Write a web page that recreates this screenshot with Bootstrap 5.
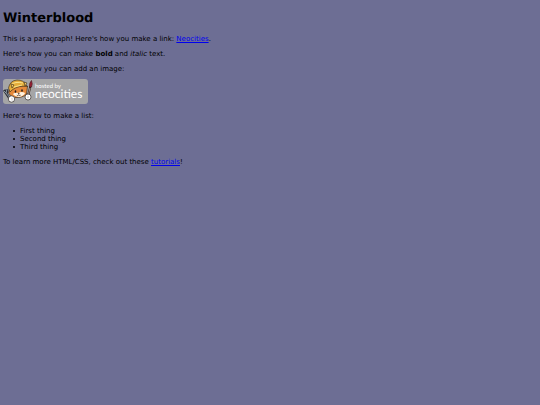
<!DOCTYPE html>
<html lang="en">
<head>
<meta charset="utf-8">
<meta name="viewport" content="width=device-width, initial-scale=1">
<title>Winterblood</title>
<link href="https://cdn.jsdelivr.net/npm/bootstrap@5.3.0/dist/css/bootstrap.min.css" rel="stylesheet">
<style>
body { background: #6d6e94; color: #000; font: 7px/8px "DejaVu Sans", Verdana, sans-serif; padding: 10px 3px; text-rendering: geometricPrecision; }
h1 { font-size: 13px; line-height: 16px; font-weight: 700; margin: 1px 0 8px; }
p, ul { margin-bottom: 7px; }
.steps { padding-left: 10px; }
.steps li { gap: 5px; }
.steps li::before { content: ""; width: 2px; height: 2px; border-radius: 50%; background: #000; }
strong { font-weight: 700; }
a, a:hover { color: #0000ee; }
.host-logo { width: 85px; height: 25px; }
.host-row { margin: 6px 0 8px; }
.host-logo text { font-family: Lato, "Open Sans", sans-serif; fill: #fff; }
</style>
</head>
<body>
<main>
  <h1>Winterblood</h1>
  <p>This is a paragraph! Here's how you make a link: <a href="https://neocities.org">Neocities</a>.</p>
  <p>Here's how you can make <strong>bold</strong> and <em>italic</em> text.</p>
  <p class="mb-0">Here's how you can add an image:</p>
  <p class="host-row">
    <a class="d-block" href="https://neocities.org" aria-label="Hosted by Neocities">
      <svg class="host-logo d-block" viewBox="0 0 85 25" aria-hidden="true">
        <rect width="85" height="25" rx="3" fill="#a5a5a6"/>
        <!-- cat head and hard hat -->
        <g stroke="#342719" stroke-width=".6" stroke-linejoin="round">
          <path d="M7 8 5.700 13Q6 17 12 18.500Q20 19 23.500 15L24.500 7 20 7Z" fill="#e5893a"/>
          <path d="M10 15Q12 13 15 14Q19 12 22 14Q21 17 16 18Q11 17 10 15Z" fill="#fff2df" stroke="none"/>
          <path d="M5.500 9Q7 1.500 14 1Q21 1 23 6L24.500 7.500Q16 6 9 11L7 13Z" fill="#e4ad3a"/>
          <path d="M8 6Q12 2 20 4M11 8 19 6" fill="none" stroke="#fff0a0" stroke-width=".8"/>
          <path d="m8 5 3 1-2 3zm13-2 3 1-2 3z" fill="#f6ce69"/>
        </g>
        <ellipse cx="12.500" cy="12.500" rx=".8" ry="1.200" fill="#211b1b"/>
        <ellipse cx="19" cy="11.500" rx=".8" ry="1.200" fill="#211b1b"/>
        <path d="m15 14 1.500.1-.8 1zM15.700 15v1m-2 0q1 1 2 0q1 1 2 0" fill="#493020" stroke="#493020" stroke-width=".4"/>
        <!-- wrench -->
        <path d="M1 11 3 14 7 20M4 10 4 14" fill="none" stroke="#303039" stroke-width="2.500"/>
        <path d="M1 12 3 14 4 10M3 14 7 19" fill="none" stroke="#8998a4" stroke-width="1"/>
        <circle cx="8.500" cy="20" r="3.200" fill="#fff" stroke="#302928" stroke-width=".7"/>
        <path d="m8 19 2 1m-2 1 2 0" stroke="#b8b3af" stroke-width=".5"/>
        <!-- paintbrush -->
        <path d="M25 17 27.500 7" stroke="#382721" stroke-width="2"/>
        <path d="M25.500 15 27 9" stroke="#e3c9b1" stroke-width=".7"/>
        <path d="M26.500 8Q26 4 28.500 1.500Q30 5 28.500 8Z" fill="#9d1f32" stroke="#421d25" stroke-width=".6"/>
        <circle cx="25" cy="18" r="3" fill="#fff" stroke="#302928" stroke-width=".7"/>
        <path d="m24 17 2 .5m-2 1 2 0" stroke="#b8b3af" stroke-width=".5"/>
        <text x="32" y="9" font-size="6">hosted by</text>
        <text x="32" y="19" font-size="12">neocities</text>
      </svg>
    </a>
  </p>
  <p>Here's how to make a list:</p>
  <ul class="list-unstyled steps">
    <li class="d-flex align-items-center">First thing</li>
    <li class="d-flex align-items-center">Second thing</li>
    <li class="d-flex align-items-center">Third thing</li>
  </ul>
  <p>To learn more HTML/CSS, check out these <a href="https://neocities.org/tutorials">tutorials</a>!</p>
</main>
<script src="https://cdn.jsdelivr.net/npm/bootstrap@5.3.0/dist/js/bootstrap.bundle.min.js"></script>
</body>
</html>
